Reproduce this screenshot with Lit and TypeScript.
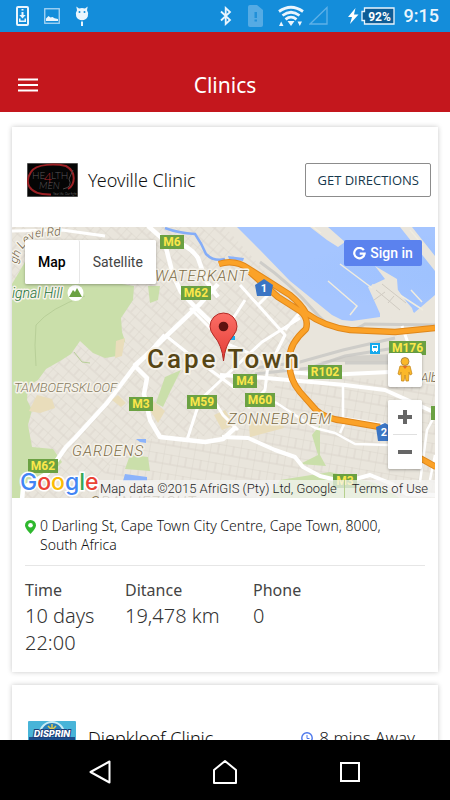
import { LitElement, html, css, svg } from "lit";
import { customElement, property } from "lit/decorators.js";

interface Badge { x: number; y: number; w: number; t: string }

const BADGES: Badge[] = [
  { x: 160, y: 235, w: 24, t: "M6" },
  { x: 181, y: 286, w: 30, t: "M62" },
  { x: 389, y: 341, w: 37, t: "M176" },
  { x: 308, y: 365, w: 34, t: "R102" },
  { x: 129, y: 397, w: 24, t: "M3" },
  { x: 187, y: 395, w: 30, t: "M59" },
  { x: 233, y: 374, w: 24, t: "M4" },
  { x: 245, y: 393, w: 30, t: "M60" },
  { x: 28, y: 459, w: 30, t: "M62" },
  { x: 333, y: 474, w: 24, t: "M3" },
  { x: 431, y: 406, w: 24, t: "" },
];

@customElement("status-bar")
class StatusBar extends LitElement {
  static styles = css`
    :host { display: flex; align-items: center; justify-content: space-between; height: 32px; padding: 0 11px 0 16px; background: #148dda; color: #fff; flex: none; }
    .left, .right { display: flex; align-items: center; }
    .left { gap: 15px; }
    svg { display: block; }
    .signal { margin-right: 18px; }
    .battery { margin-left: 1px; }
    .time { font: 500 18px/32px Roboto, sans-serif; margin-left: 9px; color: #eaf5fd; }
  `;
  render() {
    return html`
      <div class="left">
        <svg width="13" height="20" viewBox="0 0 13 20"><rect x="1" y="1" width="11" height="18" rx="1" fill="none" stroke="#eaf5fd" stroke-width="2"/><path d="M5.500 3h2v1.500h-2zM5.500 6h2v3h2.200L6.500 12.500 3.300 9h2.200zM3 12.500h1.500v2h4v-2H10V16H3z" fill="#eaf5fd"/></svg>
        <svg width="16" height="16" viewBox="0 0 16 16"><rect x=".75" y=".75" width="14.500" height="14.500" fill="none" stroke="#a9d6f4" stroke-width="1.300"/><path d="M2 13V10.500L4.500 8 6.500 9.500 8.500 9 10.500 10.300 14 11V13z" fill="#eaf5fd"/></svg>
        <svg width="14" height="20" viewBox="0 0 14 20"><path d="M1.300.5 4 2.600Q7 1.400 10 2.600L12.700.5 12 4.300Q14 7 12.800 10.500 11 14.300 7 14.300T1.200 10.500Q0 7 2 4.300z" fill="#eaf5fd"/><path d="M6 15.500h2V20H6z" fill="#eaf5fd"/><circle cx="4.500" cy="6" r="1" fill="#148dda"/><circle cx="9.500" cy="6" r="1" fill="#148dda"/></svg>
      </div>
      <div class="right">
        <svg width="12" height="20" viewBox="0 0 12 20"><path d="M1 5.500 10 14 5.700 18V2L10 6 1 14.500" fill="none" stroke="#eaf5fd" stroke-width="1.800"/></svg>
        <svg width="77" height="22" viewBox="3 0 77 22">
          <path d="M21 0h7l6 5v15q0 2-2 2H21q-2 0-2-2V2q0-2 2-2z" fill="#55abe4"/>
          <path d="M25.500 7h2.500v6h-2.500zM25.500 14.500h2.500v2h-2.500z" fill="#2190d9"/>
          <g fill="none" stroke="#eaf5fd" stroke-width="2.800"><path d="M50 6.500Q62 -2 74 6.500"/><path d="M53.500 10.500Q62 4 70.500 10.500"/><path d="M56.500 14.300Q62 10 67.500 14.300"/></g>
          <path d="M58.500 16h7L62 21zM50 21l2.200-4.500 2.300 4.500zM68.500 16.500H73l-2.200 4.500z" fill="#eaf5fd"/>
        </svg>
        <svg class="signal" width="20" height="20" viewBox="0 0 20 20"><path d="M18 1.500V18H1z" fill="none" stroke="#5fb1e8" stroke-width="1.300"/></svg>
        <svg width="13" height="18" viewBox="0 0 13 18"><path d="M8.500 1 1 10h4L3 17l8.500-9.500H7z" fill="#fff"/></svg>
        <svg class="battery" width="34" height="18" viewBox="0 0 34 18"><path d="M3.500 1H33v16H3.500v-3.500H1v-9h2.500z" fill="#0e5c96" stroke="#eaf5fd" stroke-width="1.300"/><text x="18.500" y="13.500" text-anchor="middle" font-family="Roboto, sans-serif" font-weight="700" font-size="12" fill="#fff">92%</text></svg>
        <span class="time">9:15</span>
      </div>`;
  }
}

@customElement("clinic-map")
class ClinicMap extends LitElement {
  static styles = css`
    :host { display: block; position: relative; height: 271px; overflow: hidden; background: #e9e5dc; font-family: Roboto, sans-serif; }
    .canvas { display: block; width: 100%; height: 100%; }
    button { font-family: inherit; border: 0; padding: 0; margin: 0; background: #fff; cursor: pointer; }
    .types { position: absolute; left: 13px; top: 13px; display: flex; height: 44px; background: #fff; border-radius: 2px; box-shadow: 0 1px 3px rgba(0,0,0,.3); }
    .types button { font-size: 14px; color: #444; padding: 0 13px; border-radius: 2px; }
    .types .on { font-weight: 500; color: #000; border-right: 1px solid #e6e6e6; }
    .signin { position: absolute; right: 13px; top: 13px; width: 78px; height: 26px; display: flex; align-items: center; justify-content: center; gap: 4px; background: #5b82ee; color: #fff; border-radius: 2px; font-size: 14px; font-weight: 500; white-space: nowrap; }
    .tools { position: absolute; right: 13px; top: 126px; width: 34px; display: flex; flex-direction: column; gap: 13px; }
    .tools button { display: flex; align-items: center; justify-content: center; width: 34px; height: 34px; border-radius: 2px; }
    .man, .zoom { background: #fff; border-radius: 2px; box-shadow: 0 1px 3px rgba(0,0,0,.3); }
    .zoom hr { border: 0; height: 1px; background: #e0e0e0; margin: 0 5px; }
    .legal { position: absolute; right: 0; bottom: 0; display: flex; height: 18px; font-size: 13px; line-height: 18px; color: #222; white-space: nowrap; }
    .legal > * { background: rgba(245,245,245,.72); padding: 0 7px; color: #222; text-decoration: none; }
    .legal > span { padding-left: 1px; }
    .legal > a { border-left: 1px solid #b5d08d; }
  `;
  private drawing() {
    const highway = "M219 264Q235 259 249 269L290 295Q301 304 306 313 325 327 350 330L395 332 435 328M250 272 278 297 300 311Q309 318 306 329 288 345 290 360 288 378 300 392L316 410Q325 419 345 421L380 427M420 458 436 467";
    return svg`
      <defs>
        <pattern id="streets" width="13" height="17" patternUnits="userSpaceOnUse" patternTransform="rotate(42)"><path d="M0 0H13M0 0V17M7 0V8M0 9H13" stroke="#d8d2c9" stroke-width=".8" fill="none"/></pattern>
        <pattern id="blocks" width="15" height="19" patternUnits="userSpaceOnUse" patternTransform="rotate(10)"><path d="M0 0H15M0 0V19M8 0V10M0 10H15" stroke="#d8d2c9" stroke-width=".8" fill="none"/></pattern>
        <radialGradient id="sea" cx="60%" cy="50%"><stop offset="0" stop-color="#98bffd"/><stop offset="1" stop-color="#a5c5ff"/></radialGradient>
        <linearGradient id="pin" x2="0" y2="1"><stop offset="0" stop-color="#fb6e66"/><stop offset="1" stop-color="#e33b34"/></linearGradient>
        <path id="level" d="M17 264Q22 242 38 237L75 234"/>
      </defs>
      <rect x="-200" y="227" width="1000" height="271" fill="#e9e5dc"/>
      <path d="M12 227H225L300 310 285 370 225 435 130 440 85 498H12z" fill="url(#streets)"/>
      <path d="M130 440 225 435 290 372 435 385V498H85z" fill="url(#blocks)"/>
      <path d="M-200 290 12 284 25 262 90 284H122L134 286 133 300 121 318 122 332 125 341 117 356 105 358 93 353 80 341 71 354 60 361 46 369 38 380 28 386 27 400 32 410 28 425 32 447 53 449 62 462 40 485 22 490 20 498H-200z" fill="#cadfaa"/>
      <path d="M148 286H160L158 300 150 303zM165 377 181 370 170 392 163 407 156 403zM130 455 148 457 150 471 125 469zM312 435 320 425 320 455 326 466 300 464 318 455zM280 480 330 472 375 483 400 498H270z" fill="#cadfaa"/>
      <path d="M37 395 52 399 55 408 40 413 29 411zM118 395 126 403 121 407 112 400zM153 401 165 411 158 423 151 412zM116 341 125 338 122 356 115 358zM248 416 280 420 284 428 250 437zM214 415 225 410 235 425 222 430z" fill="#e9ddbb"/>
      <path d="M237 227H800V295H435L414 313 398 290 372 284 380 312 380 317 352 321 342 320 332 315 290 281 260 250z" fill="url(#sea)"/>
      <path d="M310 227H328L345 242 338 247 327 240zM400 227H412L435 256V271zM375 266 397 279 398 292 412 308 414 315 382 318 368 287 385 279z" fill="#e9e5dc"/>
      <path d="M328 281 357 306 350 315M340 264 372 288M313 227 321 233M400 295 423 310M411 290 422 302M410 230 423 245" fill="none" stroke="#f0ecdf" stroke-width="1.500"/>
      <path d="M376 290 400 310M382 284 406 303M374 300 385 292M388 303 394 296" fill="none" stroke="#d0cbc2"/>
      <path d="M260 262 Q290 283 315 312 T365 324L435 325M255 368 300 362 343 350 395 338M255 374 310 368 345 356 395 348M345 363H395" fill="none" stroke="#cecdc9" stroke-width="3"/>
      <path d="M320 362 348 356 395 354V362z" fill="#c4c3c0" opacity=".6"/>
      <path d="M165 228Q178 233 195 234 202 244 206 254 214 262 225 259" fill="none" stroke="#84adf8" stroke-width="2.500"/>
      <path d="M136 439H146V443L140 442zM125 474 147 477V481H123zM228 256 244 258 243 261 229 259z" fill="#8bb3fb"/>
      <path d="M36 366Q34 345 36 325 50 308 85 296M74 352 82 362 90 363" fill="none" stroke="#b8cf98"/>
      <g fill="none" stroke="#fff" stroke-linejoin="round">
        <path stroke-width="4.500" d="M148 226 164 240 173 275 181 292 195 307 214 325M172 240Q190 246 198 258L206 281 218 297M22 500 23 488 48 473 66 447 75 438 107 403 135 366 200 304 218 284M135 366 147 378 144 394 150 420 160 437 205 442 223 439 236 427M134 366 150 352 165 335"/>
        <path stroke-width="3" d="M12 231 62 230 105 236M187 440 200 400 235 367 262 342 300 318M215 402 223 415 238 430M165 335 190 355 235 388M190 308 225 343 265 360M240 285 285 335 275 355 M245 300 232 320M258 305 270 293M285 330 302 310M268 365 265 390 248 408M402 326 408 343"/>
        <path stroke-width="4" d="M222 437 248 438 275 450 295 457 303 467 320 476 345 482 370 475 392 484 407 494 435 495M220 375 266 378 345 385 385 390 436 413M290 372 325 375 390 372"/>
        <path stroke-width="2.500" d="M343 385V418L388 425M275 402 315 428 335 433 355 444 390 445M340 433 345 422M420 482 427 430 435 415M430 480 435 455"/>
      </g>
      <g fill="none" stroke-linejoin="round">
        <path stroke="#e0871a" stroke-width="6.500" d=${highway}/>
        <path stroke="#fba228" stroke-width="4.500" d=${highway}/>
      </g>
      ${BADGES.map((b) => svg`<rect x=${b.x} y=${b.y} width=${b.w} height="14" fill="#6ba142"/><text x=${b.x + b.w / 2} y=${b.y + 11} text-anchor="middle" font-size="12" font-weight="700" fill="#fbe74b">${b.t}</text>`)}
      <path d="M264 279 273 285 271 296H257L255 285z" fill="#3b75c4"/><text x="264" y="292" text-anchor="middle" font-size="11" font-weight="700" fill="#fff">1</text>
      <path d="M385 423 394 428 391 441H378L376 427z" fill="#3b75c4"/><text x="384" y="436" text-anchor="middle" font-size="11" font-weight="700" fill="#fff">2</text>
      <rect x="370" y="343" width="10" height="11" fill="#16a9ec"/><path d="M372 345h6v6h-1v1h-1v-1h-2v1h-1v-1h-1z" fill="#fff"/><path d="M373 346h4v2h-4z" fill="#16a9ec"/>
      <rect x="227" y="336" width="8" height="4" fill="#16a9ec"/>
      <g font-style="italic" paint-order="stroke" stroke="#f5f2ea" stroke-width="3" stroke-linejoin="round">
        <text font-size="12" fill="#6b5a3c"><textPath href="#level">gh Level Rd</textPath></text>
        <text x="155" y="281" font-size="15" fill="#7d6c46" letter-spacing="1">WATERKANT</text>
        <text x="12" y="298" font-size="14" fill="#1b7337">ignal Hill</text>
        <text x="14" y="392" font-size="13" fill="#877a60">TAMBOERSKLOOF</text>
        <text x="72" y="456" font-size="15" fill="#7d6c46" letter-spacing="1">GARDENS</text>
        <text x="228" y="424" font-size="15" fill="#7d6c46" letter-spacing="1">ZONNEBLOEM</text>
        <text x="421" y="382" font-size="12" fill="#6b5a3c">Alb</text>
      </g>
      <text x="90" y="507" font-size="15" font-style="italic" fill="#7d6c46" letter-spacing="1">ORANJEZICHT</text>
      <circle cx="75.500" cy="293" r="8" fill="#fff"/><path d="M69 297 73 290 75 292 77 288 82 297z" fill="#6ba142"/>
      <text x="147" y="368" font-size="26" font-weight="500" letter-spacing="3" fill="#574615" paint-order="stroke" stroke="#f5f2ea" stroke-width="4" stroke-linejoin="round">Cape Town</text>
      <path d="M223.500 361Q222 345 214 336 210 331 210 326.500A13.500 13.500 0 0 1 237 326.500Q237 331 233 336 225 345 223.500 361z" fill="url(#pin)" stroke="#b12a25"/><circle cx="223.500" cy="326.500" r="4.800" fill="#5e1210"/>
      <text x="20" y="490" font-size="23" font-weight="500" font-family="Inter, sans-serif" paint-order="stroke" stroke="#fff" stroke-width="3"><tspan fill="#4285f4">G</tspan><tspan fill="#ea4335">o</tspan><tspan fill="#fbbc05">o</tspan><tspan fill="#4285f4">g</tspan><tspan fill="#34a853">l</tspan><tspan fill="#ea4335">e</tspan></text>
    `;
  }
  render() {
    return html`
      <svg class="canvas" viewBox="12 227 423 271" preserveAspectRatio="xMidYMid slice" role="img" aria-label="Map of Cape Town">${this.drawing()}</svg>
      <div class="types"><button class="on">Map</button><button>Satellite</button></div>
      <button class="signin"><svg width="13" height="13" viewBox="0 0 13 13"><path d="M10.800 3.200A5.200 5.200 0 1 0 11.600 6.700H6.700" fill="none" stroke="#fff" stroke-width="2.200"/></svg>Sign in</button>
      <div class="tools">
        <button class="man" aria-label="Street View"><svg width="18" height="26" viewBox="0 0 18 26"><circle cx="9" cy="4.500" r="4" fill="#fbb829" stroke="#9a7a45" stroke-width=".8"/><path d="M4 9h10l2 8-2 1-1-3-.5 9H10l-1-6-1 6H5.500L5 15l-1 3-2-1z" fill="#fbb829" stroke="#c98c1e" stroke-width=".8"/><path d="M6.500 9h5L9 12z" fill="#e06c28"/></svg></button>
        <div class="zoom">
          <button aria-label="Zoom in"><svg width="14" height="14"><path d="M0 7H14M7 0V14" stroke="#666" stroke-width="4"/></svg></button>
          <hr>
          <button aria-label="Zoom out"><svg width="14" height="14"><path d="M0 7H14" stroke="#666" stroke-width="4"/></svg></button>
        </div>
      </div>
      <div class="legal"><span>Map data ©2015 AfriGIS (Pty) Ltd, Google</span><a href="#terms">Terms of Use</a></div>`;
  }
}

@customElement("clinic-card")
class ClinicCard extends LitElement {
  @property() name = "";
  static styles = css`
    :host { display: block; background: #fff; box-shadow: 0 0 5px rgba(0,0,0,.22); color: #333; }
    .head { display: flex; align-items: center; height: 100px; box-sizing: border-box; padding: 6px 7px 0 15px; gap: 10px; }
    h2 { margin: 0; flex: 1; font-size: 18px; line-height: 24px; font-weight: 300; color: #111; }
  `;
  render() {
    return html`<div class="head"><slot name="logo"></slot><h2>${this.name}</h2><slot name="action"></slot></div><slot></slot>`;
  }
}

@customElement("app-root")
class AppRoot extends LitElement {
  static styles = css`
    :host { display: flex; flex-direction: column; height: 100vh; background: #fff; font-family: "Noto Sans", "Open Sans", sans-serif; font-weight: 300; color: #222; }
    svg { display: block; }
    button { cursor: pointer; }
    .bar { display: grid; grid-template-columns: 56px 1fr 56px; align-items: center; height: 80px; box-sizing: border-box; padding-top: 26px; background: #c4171d; color: #fff; flex: none; }
    .bar h1 { margin: 0; text-align: center; font-size: 21px; line-height: 32px; font-weight: 400; }
    .bar button { border: 0; background: none; padding: 0 18px; }
    main { flex: 1; min-height: 0; overflow: auto; scrollbar-width: none; display: flex; flex-direction: column; gap: 13px; padding: 15px 12px; }
    clinic-card { flex: none; }
    .directions { height: 34px; padding: 0 11px; border: 1px solid #8c8c8c; border-radius: 2px; background: #fff; color: #16384c; font: 400 13px/18px "Open Sans", sans-serif; white-space: nowrap; }
    clinic-map { margin-right: 3px; }
    .address { display: flex; gap: 4px; margin: 0 13px; padding: 18px 0 11px; font-size: 14px; line-height: 19px; color: #111; border-bottom: 1px solid #e6e6e6; }
    .address svg { flex: none; margin-top: 4px; }
    .address span { max-width: 352px; }
    .facts { display: grid; grid-template-columns: 25fr 32fr 43fr; margin: 0; padding: 12px 13px 16px; }
    dt { font-size: 16px; line-height: 24px; font-weight: 400; color: #444; }
    dd { margin: 0; font-size: 20px; line-height: 27px; }
    .away { display: flex; align-items: center; gap: 6px; padding-right: 16px; font-size: 17px; line-height: 24px; color: #222; }
    .keys { display: flex; justify-content: center; align-items: center; gap: 99px; height: 60px; background: #000; flex: none; padding-top: 4px; box-sizing: border-box; }
    .keys button { border: 0; padding: 0; background: none; }
  `;
  render() {
    return html`
      <status-bar></status-bar>
      <header class="bar">
        <button aria-label="Menu"><svg width="20" height="14" viewBox="0 0 20 14"><path d="M0 1.500H20M0 7H20M0 12.500H20" stroke="#fff" stroke-width="2"/></svg></button>
        <h1>Clinics</h1>
      </header>
      <main>
        <clinic-card name="Yeoville Clinic">
          <svg slot="logo" width="51" height="34" viewBox="0 0 51 34" role="img" aria-label="Health 4 Men"><rect width="51" height="34" fill="#050505" stroke="#999"/><path d="M24 31.500C-1 32-2 18 4 9 9 0 30 1 39 3 50 9 48 22 41 26" fill="none" stroke="#9b2024" stroke-width="2"/><g font-family="Lato, sans-serif" font-size="10" fill="#5b5759"><text x="5" y="16">HE</text><text x="24" y="16">LTH</text><text x="12" y="26" font-style="italic">MEN</text></g><text x="17" y="20" font-family="Lato, sans-serif" font-size="14" fill="#b3262b">4</text><path d="M36 26Q46 24 42 16M42 16 46 7" stroke="#4b4749" fill="none"/><text x="26" y="32" font-family="Lato, sans-serif" font-size="3" fill="#999">Your life. Our fight</text></svg>
          <button class="directions" slot="action">GET DIRECTIONS</button>
          <clinic-map></clinic-map>
          <div class="address">
            <svg width="11" height="14" viewBox="0 0 11 14"><path d="M5.500 14Q0 8.500 0 5.300A5.500 5.300 0 0 1 11 5.300Q11 8.500 5.500 14z" fill="#2eb82e"/><circle cx="5.500" cy="5.300" r="2.300" fill="#fff"/></svg>
            <span>0 Darling St, Cape Town City Centre, Cape Town, 8000, South Africa</span>
          </div>
          <dl class="facts">
            <div><dt>Time</dt><dd>10 days<br>22:00</dd></div>
            <div><dt>Ditance</dt><dd>19,478 km</dd></div>
            <div><dt>Phone</dt><dd>0</dd></div>
          </dl>
        </clinic-card>
        <clinic-card name="Diepkloof Clinic">
          <svg slot="logo" width="51" height="34" viewBox="0 0 51 34" role="img" aria-label="Disprin"><rect x="1" width="48" height="34" rx="1" fill="#48b4d8"/><path d="M13 13A12 12 0 0 1 37 13" fill="#2a7fb8" stroke="#c9ecf5" stroke-width="2"/><path d="M25 3V10M21 5 25 9 29 5" stroke="#e4c94b" fill="none" stroke-width="1.500"/><rect x="2" y="16" width="46" height="4" fill="#1c4e8c"/><text x="25" y="16" text-anchor="middle" font-family="Inter, sans-serif" font-weight="800" font-style="italic" font-size="9" fill="#fff" stroke="#1c3f78" stroke-width="2" paint-order="stroke">DISPRIN</text></svg>
          <span class="away" slot="action"><svg width="12" height="12" viewBox="0 0 12 12"><circle cx="6" cy="6" r="5.200" fill="none" stroke="#4a76ec" stroke-width="1.400"/><path d="M6 3V6.500H8.500" fill="none" stroke="#4a76ec"/></svg>8 mins Away</span>
        </clinic-card>
      </main>
      <nav class="keys">
        <button aria-label="Back"><svg width="26" height="26" viewBox="0 0 26 26"><path d="M22.500 2.500V23.500L3.500 13z" fill="none" stroke="#fff" stroke-width="2" stroke-linejoin="round"/></svg></button>
        <button aria-label="Home"><svg width="26" height="26" viewBox="0 0 26 26"><path d="M2 24V11L13 2 24 11V24z" fill="none" stroke="#fff" stroke-width="2" stroke-linejoin="round"/></svg></button>
        <button aria-label="Recent apps"><svg width="26" height="26" viewBox="0 0 26 26"><rect x="4" y="4" width="18" height="18" fill="none" stroke="#fff" stroke-width="2"/></svg></button>
      </nav>`;
  }
}
